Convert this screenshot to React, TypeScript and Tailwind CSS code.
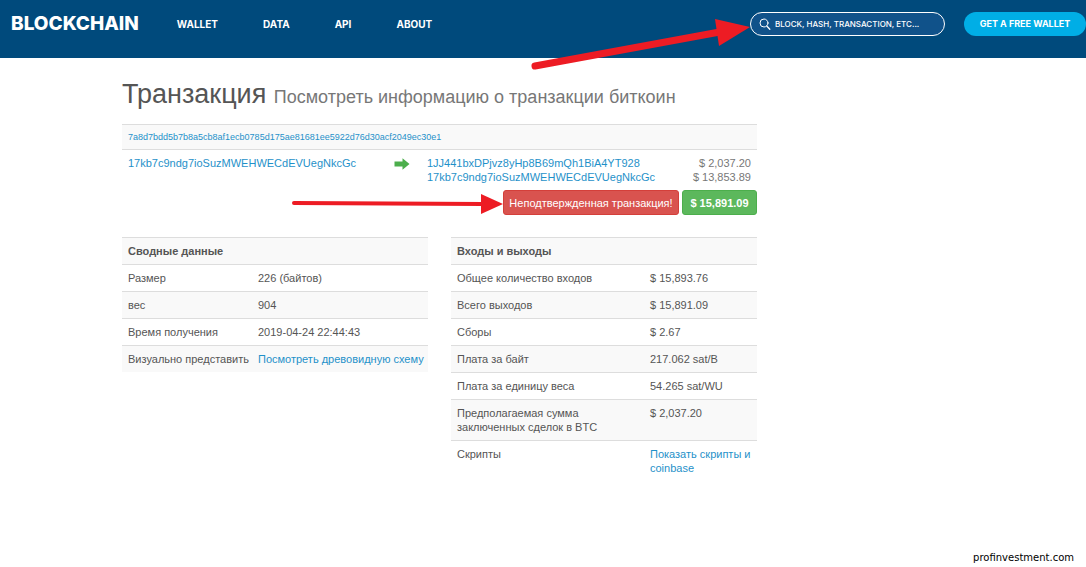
import { FormEvent, ReactNode, useState } from 'react'

type Row = {
  label: string
  value: ReactNode
}

const navLinks = ['WALLET', 'DATA', 'API', 'ABOUT']

const linkStyle = "text-[#1f91c9] hover:underline"

const summary: Row[] = [
  { label: 'Размер', value: '226 (байтов)' },
  { label: 'вес', value: '904' },
  { label: 'Время получения', value: '2019-04-24 22:44:43' },
  { label: 'Визуально представить', value: <a href="#tree" className={`whitespace-nowrap ${linkStyle}`}>Посмотреть древовидную схему</a> },
]

const inputsOutputs: Row[] = [
  { label: 'Общее количество входов', value: '$ 15,893.76' },
  { label: 'Всего выходов', value: '$ 15,891.09' },
  { label: 'Сборы', value: '$ 2.67' },
  { label: 'Плата за байт', value: '217.062 sat/B' },
  { label: 'Плата за единицу веса', value: '54.265 sat/WU' },
  { label: 'Предполагаемая сумма заключенных сделок в BTC', value: '$ 2,037.20' },
  { label: 'Скрипты', value: <a href="#scripts" className={linkStyle}>Показать скрипты и coinbase</a> },
]

const Header = () => {
  const [query, setQuery] = useState("")

  const handleSubmit = (e: FormEvent): void => {
    e.preventDefault()
  }

  return (
    <header className="relative flex h-[58px] items-start bg-[#004a7c] pl-[11px] pt-3 font-['Inter',sans-serif] text-white">
      <a href="#home" className="text-[19px] leading-6 font-extrabold">BLOCKCHAIN</a>
      <nav className="ml-[38px] flex gap-[45px] text-[10px] leading-6 font-bold">
        {navLinks.map((link) => (
          <a key={link} href={`#${link.toLowerCase()}`}>{link}</a>
        ))}
      </nav>
      <form onSubmit={handleSubmit} className="ml-auto flex h-6 w-[195px] items-center gap-1 rounded-full border border-white bg-[#10528a] pl-2">
        <svg className="size-3 shrink-0" viewBox="0 0 12 12" fill="none" stroke="currentColor" strokeLinecap="round">
          <circle cx="5" cy="5" r="4" />
          <path d="M8 8.2 L10.8 11.2" strokeWidth="1.3" />
        </svg>
        <input
          type="text"
          aria-label="Search"
          className="w-full min-w-0 bg-transparent text-[8px] font-medium outline-none placeholder:text-white"
          placeholder="BLOCK, HASH, TRANSACTION, ETC..."
          value={query}
          onChange={(e) => setQuery(e.target.value)}
        />
      </form>
      <button type="button" className="ml-[19px] h-6 w-[122px] rounded-full bg-[#00aee6] text-[9px] font-bold">GET A FREE WALLET</button>

      {/* pointer to the search box */}
      <svg className="pointer-events-none absolute right-[335px] top-[18px] h-[54px] w-[222px]" viewBox="0 0 222 54" aria-hidden="true">
        <path d="M6 48 L188 14.500" stroke="#ed1c24" strokeWidth="7" strokeLinecap="round" />
        <path d="M186 1 L221 9 L190 28 Z" fill="#ed1c24" />
      </svg>
    </header>
  )
}

const DataTable = ({ title, rows, labelWidth }: { title: string, rows: Row[], labelWidth: string }) => {
  return (
    <table className="w-full table-fixed text-left">
      <thead>
        <tr className="border-t border-[#ddd] bg-[#f9f9f9]">
          <th className={`py-1.5 pl-1.5 ${labelWidth}`}>{title}</th>
          <th className="p-1.5"></th>
        </tr>
      </thead>
      <tbody>
        {rows.map((row) => (
          <tr key={row.label} className="border-t border-[#ddd] align-top even:bg-[#f9f9f9]">
            <td className="py-1.5 pl-1.5">{row.label}</td>
            <td className="p-1.5">{row.value}</td>
          </tr>
        ))}
      </tbody>
    </table>
  )
}

const Transaction = () => {
  return (
    <section>
      <table className="w-full table-fixed text-left">
        <colgroup>
          <col className="w-[266px]" />
          <col className="w-[33px]" />
          <col />
          <col className="w-[80px]" />
        </colgroup>
        <thead>
          <tr className="border-y border-[#ddd] bg-[#f9f9f9]">
            <th colSpan={4} className="px-1.5 py-[5px] text-[9px] font-normal">
              <a href="#tx" className={linkStyle}>7a8d7bdd5b7b8a5cb8af1ecb0785d175ae81681ee5922d76d30acf2049ec30e1</a>
            </th>
          </tr>
        </thead>
        <tbody>
          <tr className="align-top">
            <td className="p-1.5"><a href="#from" className={linkStyle}>17kb7c9ndg7ioSuzMWEHWECdEVUegNkcGc</a></td>
            <td className="p-1.5">
              <svg className="mt-0.5 h-3 w-4" viewBox="0 0 16 12" aria-hidden="true">
                <path d="M0.500 3.500 H8.500 V0.300 L15.500 6 L8.500 11.700 V8.500 H0.500 Z" fill="#4cae4c" />
              </svg>
            </td>
            <td className="p-1.5">
              <a href="#to1" className={`block ${linkStyle}`}>1JJ441bxDPjvz8yHp8B69mQh1BiA4YT928</a>
              <a href="#to2" className={`block ${linkStyle}`}>17kb7c9ndg7ioSuzMWEHWECdEVUegNkcGc</a>
            </td>
            <td className="p-1.5 text-right text-[#777]">
              <div>$ 2,037.20</div>
              <div>$ 13,853.89</div>
            </td>
          </tr>
        </tbody>
      </table>
      <div className="flex justify-end gap-[3px] text-white">
        <div className="relative">
          <button type="button" className="h-[25px] w-[176px] rounded-[3px] border border-[#d43f3a] bg-[#d9534f]">Неподтвержденная транзакция!</button>
          <svg className="pointer-events-none absolute right-full top-0.5 h-6 w-[212px]" viewBox="0 0 212 24" aria-hidden="true">
            <path d="M3 11 L192 12" stroke="#ed1c24" strokeWidth="4" strokeLinecap="round" />
            <path d="M190 2 L212 12 L190 22 Z" fill="#ed1c24" />
          </svg>
        </div>
        <button type="button" className="h-[25px] w-[75px] rounded-[3px] border border-[#4cae4c] bg-[#5cb85c] font-bold">$ 15,891.09</button>
      </div>
    </section>
  )
}

const App = () => {
  return (
    <div className="flex min-h-screen flex-col bg-white font-['Liberation_Sans',Arial,sans-serif] text-[11px] leading-[14px] text-[#555]">
      <Header />
      <main className="ml-[122px] mt-5 w-full max-w-[635px]">
        <h1 className="mb-[11px] text-[27px] leading-8">
          Транзакция <small className="text-[18px] text-[#777]">Посмотреть информацию о транзакции биткоин</small>
        </h1>
        <Transaction />
        <div className="mt-[22px] grid grid-cols-2 items-start gap-[23px]">
          <DataTable title="Сводные данные" rows={summary} labelWidth="w-[130px]" />
          <DataTable title="Входы и выходы" rows={inputsOutputs} labelWidth="w-[193px]" />
        </div>
      </main>
      <footer className="mt-auto pr-3 pb-0.5 text-right font-['DejaVu_Sans',sans-serif] text-[10px] text-black">profinvestment.com</footer>
    </div>
  )
}

export default App
